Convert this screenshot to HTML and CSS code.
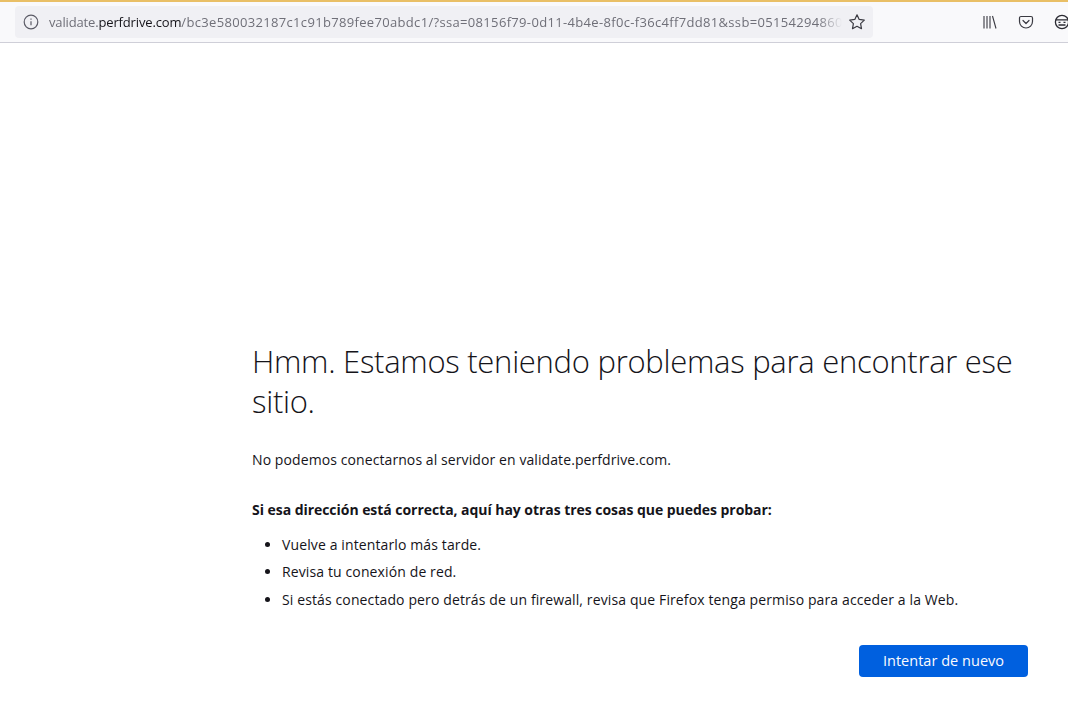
FILE: index.html
```html
<!DOCTYPE html>
<html lang="es">
<head>
<meta charset="utf-8">
<title>Problema al cargar la página</title>
<link rel="stylesheet" href="styles.css">
</head>
<body>
<header class="toolbar">
  <div class="urlbar">
    <svg class="icon info" viewBox="0 0 16 16" width="16" height="16" fill="none" stroke="#5b5b66" stroke-width="1.2"><circle cx="8" cy="8" r="6.8"/><path d="M8 7.2v4M8 4.400v1.300"/></svg>
    <div class="url"><span class="dim">validate.</span>perfdrive.com<span class="dim path">/bc3e580032187c1c91b789fee70abdc1/?ssa=08156f79-0d11-4b4e-8f0c-f36c4ff7dd81&amp;ssb=05154294860</span></div>
    <svg class="icon star" viewBox="0 0 16 16" width="16" height="16" fill="none" stroke="#3a3a42" stroke-width="1.2" stroke-linejoin="round"><path d="M8 .8l2.200 4.600 5.100.7-3.700 3.500.9 5.100L8 12.300l-4.500 2.400.9-5.100L.7 6.100l5.100-.7z"/></svg>
  </div>
  <div class="tools">
    <svg class="icon" viewBox="0 0 16 16" width="16" height="16" fill="none" stroke="#3a3a42" stroke-width="1.100"><path d="M2 2v12.500M5 2v12.500M8 2v12.500M10.500 2l3.500 12.500"/></svg>
    <svg class="icon" viewBox="0 0 16 16" width="16" height="16" fill="none" stroke="#3a3a42" stroke-width="1.200" stroke-linecap="round" stroke-linejoin="round"><path d="M3 2.500h10a1.500 1.500 0 0 1 1.500 1.500v3.500a6.500 6.500 0 0 1-13 0V4A1.500 1.500 0 0 1 3 2.500z"/><path d="M5 6.500l3 3 3-3"/></svg>
    <svg class="icon" viewBox="0 0 16 16" width="16" height="16" fill="none" stroke="#2a2a32" stroke-width="1.300"><circle cx="8" cy="8" r="6.600"/><path d="M1.800 5.800h12.400M4.500 8.400h2M9.500 8.400h2M4.500 11h7"/></svg>
  </div>
</header>
<main class="page">
  <h1 class="title">Hmm. Estamos teniendo problemas para encontrar ese sitio.</h1>
  <p class="intro">No podemos conectarnos al servidor en validate.perfdrive.com.</p>
  <p class="lead">Si esa dirección está correcta, aquí hay otras tres cosas que puedes probar:</p>
  <ul class="tips">
    <li>Vuelve a intentarlo más tarde.</li>
    <li>Revisa tu conexión de red.</li>
    <li>Si estás conectado pero detrás de un firewall, revisa que Firefox tenga permiso para acceder a la Web.</li>
  </ul>
  <div class="actions"><button class="retry">Intentar de nuevo</button></div>
</main>
</body>
</html>
```
FILE: styles.css
```css
html, body { margin: 0; padding: 0; height: 100%; overflow: hidden; background: #fff; }
body { font-family: "Open Sans", "Noto Sans", sans-serif; color: #15141a; }
.toolbar {
  box-sizing: border-box; height: 43px; display: flex; align-items: center;
  border-top: 2px solid #e9bf66; border-bottom: 1px solid #cfcfd8;
  background: #f9f9fb; padding-left: 15px; overflow: hidden;
}
.urlbar {
  box-sizing: border-box; width: 858px; height: 32px; flex: none; display: flex; align-items: center;
  background: #f0f0f4; border-radius: 4px; padding: 0 8px;
}
.icon { flex: none; display: block; }
.url {
  flex: 1; min-width: 0; margin: 0 7px 0 10px; white-space: nowrap; overflow: hidden;
  font-size: 13px; letter-spacing: -0.15px; color: #15141a;
  -webkit-mask-image: linear-gradient(to left, transparent 0, #000 24px);
  mask-image: linear-gradient(to left, transparent 0, #000 24px);
}
.dim { color: #6f6f78; }
.path { letter-spacing: 0.33px; }
.tools { display: flex; gap: 20px; margin-left: 109px; flex: none; }
.page { box-sizing: border-box; padding: 0 40px 0 252px; }
.title {
  margin: 298px 0 0; font-size: 31px; font-weight: 300; line-height: 40px; color: #15141a;
  letter-spacing: -0.28px;
}
.intro { margin: 29px 0 0; font-size: 14px; line-height: 20px; letter-spacing: 0.09px; }
.lead { margin: 30px 0 0; font-size: 14px; line-height: 20px; font-weight: 700; letter-spacing: -0.044px; }
.tips { margin: 14.7px 0 0; padding: 0 0 0 30px; font-size: 14px; letter-spacing: 0.12px; }
.tips li { line-height: 20px; margin-bottom: 7.500px; }
.actions { display: flex; justify-content: flex-end; margin-top: 35.3px; }
.retry {
  width: 169px; height: 32px; border: 0; border-radius: 4px; background: #0060df; color: #fbfbfe;
  font: 500 14.500px "Open Sans", "Noto Sans", sans-serif; letter-spacing: 0.03px; padding: 0;
}
```
